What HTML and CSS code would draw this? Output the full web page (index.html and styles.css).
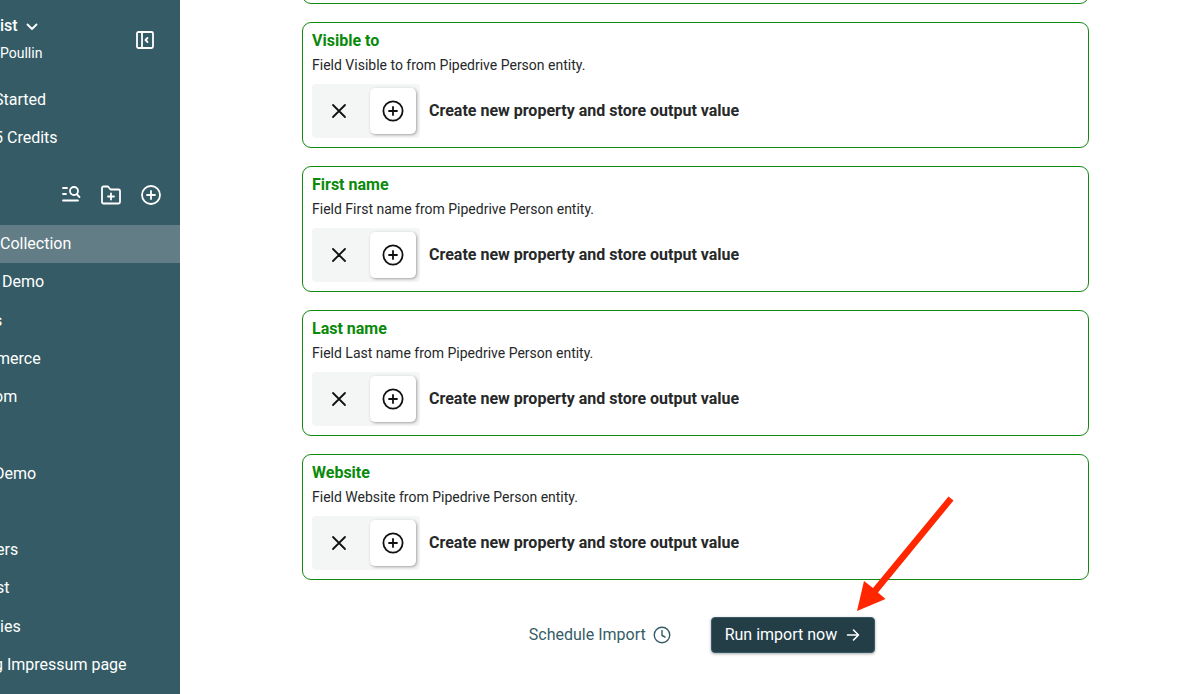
FILE: index.html
```html
<!DOCTYPE html>
<html lang="en">
<head>
    <meta charset="UTF-8">
    <meta name="viewport" content="width=device-width, initial-scale=1.0">
    <title>Import</title>
    <link rel="stylesheet" href="styles.css">
</head>
<body>
    <!-- Shared icons -->
    <svg class="sprite" aria-hidden="true">
        <symbol id="icon-x" viewBox="0 0 24 24"><path d="M6 6l12 12M18 6L6 18"/></symbol>
        <symbol id="icon-plus" viewBox="0 0 24 24"><circle cx="12" cy="12" r="9.600"/><path d="M12 8v8M8 12h8"/></symbol>
    </svg>

    <div class="layout">
        <aside class="sidebar">
            <div class="sidebar-head">
                <div>
                    <button class="workspace" type="button">ist
                        <svg width="12" height="8" viewBox="0 0 12 8" aria-hidden="true"><path d="M1.500 2.500L6 7l4.500-4.500"/></svg>
                    </button>
                    <div class="user">Poullin</div>
                </div>
                <button class="icon-button" type="button" aria-label="Collapse sidebar">
                    <svg width="18" height="18" viewBox="0 0 18 18" aria-hidden="true"><rect x="1" y="1" width="16" height="16" rx="1.500"/><path d="M6 1v16M11.500 7L9.500 9l2 2"/></svg>
                </button>
            </div>

            <nav class="top-links">
                <a class="cut-more" href="#">Started</a>
                <a class="cut-more" href="#">5 Credits</a>
            </nav>

            <div class="tools">
                <button class="icon-button" type="button" aria-label="Search collections">
                    <svg width="20" height="20" viewBox="0 0 20 20" aria-hidden="true"><path d="M2 3h4M2 9h3M2 15.500h15M16 9.500l2.500 2.500"/><circle cx="13" cy="6" r="4"/></svg>
                </button>
                <button class="icon-button" type="button" aria-label="New folder">
                    <svg width="20" height="20" viewBox="0 0 20 20" aria-hidden="true"><path d="M1 3a1.500 1.500 0 0 1 1.500-1.500h4.500l2.500 3h8A1.500 1.500 0 0 1 19 6v11a1.500 1.500 0 0 1-1.500 1.500h-15A1.500 1.500 0 0 1 1 17zM10 8.500v6M7 11.500h6"/></svg>
                </button>
                <button class="icon-button" type="button" aria-label="New collection">
                    <svg width="20" height="20" viewBox="0 0 20 20" aria-hidden="true"><circle cx="10" cy="10" r="9"/><path d="M10 6v8M6 10h8"/></svg>
                </button>
            </div>

            <ul class="collections">
                <li class="active"><a href="#">Collection</a></li>
                <li><a class="inset" href="#">Demo</a></li>
                <li><a class="cut-more" href="#">s</a></li>
                <li><a class="cut" href="#">merce</a></li>
                <li><a class="cut-more" href="#">om</a></li>
                <li></li>
                <li><a class="cut-more" href="#">Demo</a></li>
                <li></li>
                <li><a class="cut" href="#">ers</a></li>
                <li><a class="cut" href="#">st</a></li>
                <li><a href="#">ies</a></li>
                <li><a class="cut-more" href="#">g Impressum page</a></li>
            </ul>
        </aside>

        <main class="content">
            <section class="card"></section>

            <section class="card">
                <h2>Visible to</h2>
                <p>Field Visible to from Pipedrive Person entity.</p>
                <div class="choice">
                    <div class="toggle">
                        <button type="button" aria-label="Ignore"><svg aria-hidden="true"><use href="#icon-x"/></svg></button>
                        <button class="selected" type="button" aria-label="Create"><svg aria-hidden="true"><use href="#icon-plus"/></svg></button>
                    </div>
                    <strong>Create new property and store output value</strong>
                </div>
            </section>

            <section class="card">
                <h2>First name</h2>
                <p>Field First name from Pipedrive Person entity.</p>
                <div class="choice">
                    <div class="toggle">
                        <button type="button" aria-label="Ignore"><svg aria-hidden="true"><use href="#icon-x"/></svg></button>
                        <button class="selected" type="button" aria-label="Create"><svg aria-hidden="true"><use href="#icon-plus"/></svg></button>
                    </div>
                    <strong>Create new property and store output value</strong>
                </div>
            </section>

            <section class="card">
                <h2>Last name</h2>
                <p>Field Last name from Pipedrive Person entity.</p>
                <div class="choice">
                    <div class="toggle">
                        <button type="button" aria-label="Ignore"><svg aria-hidden="true"><use href="#icon-x"/></svg></button>
                        <button class="selected" type="button" aria-label="Create"><svg aria-hidden="true"><use href="#icon-plus"/></svg></button>
                    </div>
                    <strong>Create new property and store output value</strong>
                </div>
            </section>

            <section class="card">
                <h2>Website</h2>
                <p>Field Website from Pipedrive Person entity.</p>
                <div class="choice">
                    <div class="toggle">
                        <button type="button" aria-label="Ignore"><svg aria-hidden="true"><use href="#icon-x"/></svg></button>
                        <button class="selected" type="button" aria-label="Create"><svg aria-hidden="true"><use href="#icon-plus"/></svg></button>
                    </div>
                    <strong>Create new property and store output value</strong>
                </div>
            </section>

            <div class="actions">
                <button class="schedule" type="button">Schedule Import
                    <svg width="18" height="18" viewBox="0 0 18 18" aria-hidden="true"><circle cx="9" cy="9" r="7.750"/><path d="M9 4.500V9.500l3 1.500"/></svg>
                </button>
                <div class="run-wrap">
                    <button class="run" type="button">Run import now
                        <svg width="14" height="14" viewBox="0 0 14 14" aria-hidden="true"><path d="M1.500 7h11M7.500 2L12.500 7l-5 5"/></svg>
                    </button>
                    <!-- Pointer arrow over the run button -->
                    <svg class="pointer" width="98" height="116" viewBox="0 0 98 116" aria-hidden="true"><path d="M92.500 0.500L97.500 4.500L22 96.500L29.500 103L1 115L8 85L17 92z"/></svg>
                </div>
            </div>
        </main>
    </div>
</body>
</html>
```
FILE: styles.css
```css
* {
    box-sizing: border-box;
}
body {
    font-family: Roboto, Arial, sans-serif;
    font-size: 16px;
    line-height: 20px;
    margin: 0;
    color: #262829;
    background: #fff;
}
button {
    display: flex;
    align-items: center;
    padding: 0;
    font: inherit;
    color: inherit;
    background: none;
    border: none;
    cursor: pointer;
}
svg {
    display: block;
    fill: none;
    stroke: currentColor;
    stroke-width: 1.6;
    stroke-linecap: round;
    stroke-linejoin: round;
}
.sprite {
    display: none;
}
.layout {
    display: flex;
    height: 100vh;
    overflow: hidden;
}

/* Sidebar */
.sidebar {
    display: flex;
    flex-direction: column;
    flex: 0 0 180px;
    padding: 16px 0 10px;
    overflow: hidden;
    color: #fff;
    background: #355c66;
}
.sidebar svg {
    stroke-width: 1.8;
}
.sidebar a {
    color: inherit;
    text-decoration: none;
    white-space: nowrap;
}
.sidebar-head {
    display: flex;
    align-items: center;
    justify-content: space-between;
    padding-right: 26px;
}
.workspace {
    gap: 8px;
    font-weight: 500;
}
.user {
    margin-top: 7px;
    font-size: 14px;
}
.top-links {
    display: flex;
    flex-direction: column;
    gap: 18px;
    margin-top: 27px;
}
.cut {
    margin-left: -4px;
}
.cut-more {
    margin-left: -6px;
}
.inset {
    margin-left: 2px;
}
.tools {
    display: flex;
    justify-content: flex-end;
    gap: 20px;
    padding: 37px 19px 20px 0;
}
.collections {
    display: flex;
    flex: 1;
    flex-direction: column;
    margin: 0;
    padding: 0;
    list-style: none;
}
.collections li {
    display: flex;
    flex: 1;
    align-items: center;
}
.collections .active {
    background: #627d86;
}

/* Field cards */
.content {
    display: flex;
    flex: 1;
    flex-direction: column;
    justify-content: flex-end;
    gap: 18px;
    min-width: 0;
    padding: 0 111px 41px 122px;
}
.card {
    flex-shrink: 0;
    min-height: 126px;
    padding: 8px 9px 9px;
    border: 1px solid #128a12;
    border-radius: 9px;
}
.card h2 {
    margin: 0;
    font-size: 16px;
    font-weight: 700;
    color: #0a8a0a;
}
.card p {
    margin: 4px 0 9px;
    font-size: 14px;
}
.choice {
    display: flex;
    align-items: center;
    gap: 9px;
}
.toggle {
    display: flex;
    gap: 8px;
    padding: 4px;
    border-radius: 4px;
    background: #f4f6f6;
}
.toggle button {
    justify-content: center;
    width: 46px;
    height: 46px;
    border-radius: 5px;
    color: #111;
}
.toggle svg {
    width: 24px;
    height: 24px;
    stroke-width: 1.8;
}
.toggle .selected {
    background: #fff;
    box-shadow: 1px 1px 3px rgba(0, 0, 0, 0.35);
}

/* Bottom actions */
.actions {
    display: flex;
    flex-shrink: 0;
    justify-content: center;
    gap: 24px;
    margin-top: 19px;
    padding-right: 3px;
}
.schedule {
    gap: 7px;
    padding: 0 16px;
    color: #355c66;
}
.schedule svg {
    stroke-width: 1.4;
}
.run-wrap {
    position: relative;
}
.run {
    gap: 9px;
    height: 36px;
    padding: 0 14px 0 13px;
    border: 1px solid #355c66;
    border-radius: 4px;
    color: #fff;
    background: #233e47;
    box-shadow: 0 1px 3px rgba(0, 0, 0, 0.35);
}
.pointer {
    position: absolute;
    right: -79px;
    bottom: 41px;
    fill: #ff2600;
    stroke: none;
}
```
